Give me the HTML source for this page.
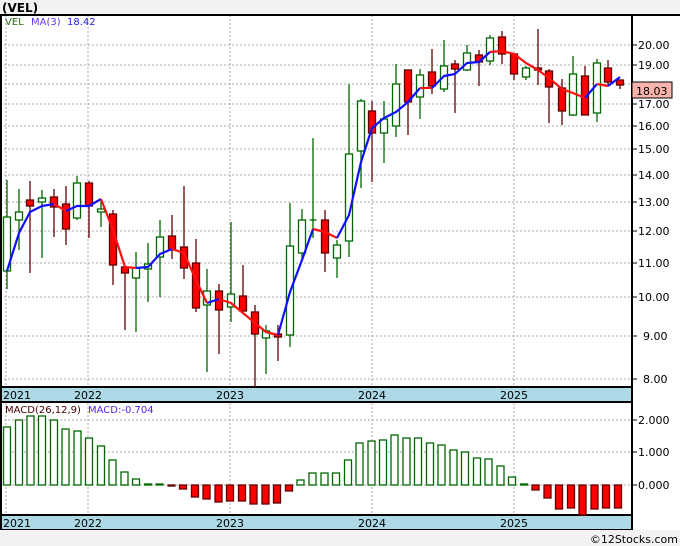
<!DOCTYPE html>
<html><head><meta charset="utf-8"><style>
html,body{margin:0;padding:0;background:#f2f2f2;}
svg{display:block;font-family:"DejaVu Sans","Liberation Sans",sans-serif;}
</style></head><body>
<svg width="680" height="546" viewBox="0 0 680 546" xmlns="http://www.w3.org/2000/svg">
<rect x="0" y="0" width="680" height="546" fill="#f2f2f2"/>
<text x="2" y="12" font-size="12" font-weight="bold" fill="#000">(VEL)</text>
<rect x="0" y="14" width="680" height="516" fill="#fff"/>
<!-- grids -->
<g stroke="#aaa" stroke-width="1" stroke-dasharray="2,2">
<line x1="0" y1="45" x2="632" y2="45"/><line x1="0" y1="65" x2="632" y2="65"/><line x1="0" y1="84" x2="632" y2="84"/><line x1="0" y1="104" x2="632" y2="104"/><line x1="0" y1="126" x2="632" y2="126"/><line x1="0" y1="149" x2="632" y2="149"/><line x1="0" y1="175" x2="632" y2="175"/><line x1="0" y1="202" x2="632" y2="202"/><line x1="0" y1="231" x2="632" y2="231"/><line x1="0" y1="263" x2="632" y2="263"/><line x1="0" y1="297" x2="632" y2="297"/><line x1="0" y1="336" x2="632" y2="336"/><line x1="0" y1="379" x2="632" y2="379"/>
<line x1="0" y1="420" x2="632" y2="420"/><line x1="0" y1="452" x2="632" y2="452"/><line x1="0" y1="485" x2="632" y2="485"/>
<line x1="6" y1="15" x2="6" y2="530"/><line x1="88" y1="15" x2="88" y2="530"/><line x1="230" y1="15" x2="230" y2="530"/><line x1="372" y1="15" x2="372" y2="530"/><line x1="514" y1="15" x2="514" y2="530"/>
</g>
<!-- frame -->
<rect x="0" y="387" width="632" height="15" fill="#add8e6"/>
<rect x="0" y="515" width="632" height="15" fill="#add8e6"/>
<g stroke="#000" stroke-width="2" fill="none">
<line x1="0" y1="15" x2="680" y2="15"/>
<line x1="1" y1="14" x2="1" y2="530"/>
<line x1="0" y1="387" x2="632" y2="387"/><line x1="0" y1="402" x2="632" y2="402"/>
<line x1="0" y1="515" x2="632" y2="515"/><line x1="0" y1="530" x2="632" y2="530"/>
<line x1="632" y1="14" x2="632" y2="530"/>
</g>
<g font-size="11" fill="#000">
<text x="3" y="399">2021</text><text x="74" y="399">2022</text><text x="216" y="399">2023</text><text x="358" y="399">2024</text><text x="500" y="399">2025</text>
<text x="3" y="527">2021</text><text x="74" y="527">2022</text><text x="216" y="527">2023</text><text x="358" y="527">2024</text><text x="500" y="527">2025</text>
</g>
<!-- right axis -->
<g stroke="#000" stroke-width="1">
<line x1="632" y1="45" x2="637" y2="45"/><line x1="632" y1="65" x2="637" y2="65"/><line x1="632" y1="84" x2="637" y2="84"/><line x1="632" y1="104" x2="637" y2="104"/><line x1="632" y1="126" x2="637" y2="126"/><line x1="632" y1="149" x2="637" y2="149"/><line x1="632" y1="175" x2="637" y2="175"/><line x1="632" y1="202" x2="637" y2="202"/><line x1="632" y1="231" x2="637" y2="231"/><line x1="632" y1="263" x2="637" y2="263"/><line x1="632" y1="297" x2="637" y2="297"/><line x1="632" y1="336" x2="637" y2="336"/><line x1="632" y1="379" x2="637" y2="379"/>
<line x1="632" y1="420" x2="637" y2="420"/><line x1="632" y1="452" x2="637" y2="452"/><line x1="632" y1="485" x2="637" y2="485"/>
</g>
<g font-size="11" fill="#000">
<text x="638" y="49">20.00</text><text x="638" y="69">19.00</text><text x="638" y="108">17.00</text><text x="638" y="130">16.00</text><text x="638" y="153">15.00</text><text x="638" y="179">14.00</text><text x="638" y="206">13.00</text><text x="638" y="235">12.00</text><text x="638" y="267">11.00</text><text x="638" y="301">10.00</text><text x="643" y="340">9.00</text><text x="643" y="383">8.00</text>
<text x="638" y="424">2.000</text><text x="638" y="456">1.000</text><text x="638" y="489">0.000</text>
</g>
<rect x="632" y="82" width="40" height="16" fill="#f8b4ac" stroke="#000" stroke-width="1"/>
<text x="636" y="95" font-size="11" fill="#000">18.03</text>
<!-- legend -->
<g font-size="10">
<text x="5" y="25" fill="#2a6a10">VEL</text>
<text x="31" y="25" fill="#6633ff">MA(3)</text>
<text x="67" y="25" fill="#2222ee">18.42</text>
<text x="5" y="413" fill="#400">MACD(26,12,9)</text>
<text x="88" y="413" fill="#5522ee">MACD:-0.704</text>
</g>
<!-- candles: green -->
<g stroke="#006600" stroke-width="1.3" fill="#fff">
<line x1="7" y1="180" x2="7" y2="289"/><rect x="3.5" y="217" width="7" height="54"/>
<line x1="19" y1="189" x2="19" y2="250"/><rect x="15.5" y="212" width="7" height="8"/>
<line x1="42" y1="190" x2="42" y2="258"/><rect x="38.5" y="198" width="7" height="4"/>
<line x1="77" y1="176" x2="77" y2="220"/><rect x="73.5" y="183" width="7" height="35"/>
<line x1="101" y1="199" x2="101" y2="227"/><rect x="97.5" y="209" width="7" height="3"/>
<line x1="136" y1="252" x2="136" y2="332"/><rect x="132.5" y="268" width="7" height="10"/>
<line x1="148" y1="243" x2="148" y2="302"/><rect x="144.5" y="264" width="7" height="5"/>
<line x1="160" y1="220" x2="160" y2="297"/><rect x="156.5" y="237" width="7" height="20"/>
<line x1="207" y1="269" x2="207" y2="372"/><rect x="203.5" y="291" width="7" height="14"/>
<line x1="231" y1="222" x2="231" y2="322"/><rect x="227.5" y="294" width="7" height="13"/>
<line x1="266" y1="325" x2="266" y2="374"/><rect x="262.5" y="331" width="7" height="7"/>
<line x1="290" y1="203" x2="290" y2="347"/><rect x="286.5" y="246" width="7" height="89"/>
<line x1="302" y1="209" x2="302" y2="260"/><rect x="298.5" y="220" width="7" height="33"/>
<line x1="313" y1="138" x2="313" y2="238"/><line x1="309.5" y1="220" x2="316.5" y2="220"/>
<line x1="337" y1="240" x2="337" y2="278"/><rect x="333.5" y="245" width="7" height="13"/>
<line x1="349" y1="84" x2="349" y2="257"/><rect x="345.5" y="154" width="7" height="87"/>
<line x1="361" y1="99" x2="361" y2="188"/><rect x="357.5" y="101" width="7" height="50"/>
<line x1="384" y1="101" x2="384" y2="163"/><rect x="380.5" y="119" width="7" height="14"/>
<line x1="396" y1="64" x2="396" y2="137"/><rect x="392.5" y="84" width="7" height="42"/>
<line x1="420" y1="69" x2="420" y2="119"/><rect x="416.5" y="75" width="7" height="22"/>
<line x1="444" y1="40" x2="444" y2="92"/><rect x="440.5" y="66" width="7" height="23"/>
<line x1="467" y1="45" x2="467" y2="71"/><rect x="463.5" y="53" width="7" height="17"/>
<line x1="490" y1="35" x2="490" y2="65"/><rect x="486.5" y="38" width="7" height="23"/>
<line x1="526" y1="66" x2="526" y2="80"/><rect x="522.5" y="68" width="7" height="9"/>
<line x1="573" y1="56" x2="573" y2="116"/><rect x="569.5" y="74" width="7" height="41"/>
<line x1="597" y1="59" x2="597" y2="122"/><rect x="593.5" y="63" width="7" height="50"/>
</g>
<!-- red candles -->
<g stroke="#600000" stroke-width="1.3" fill="#ff0000">
<line x1="30" y1="181" x2="30" y2="273"/><rect x="26.5" y="200" width="7" height="6"/>
<line x1="54" y1="189" x2="54" y2="237"/><rect x="50.5" y="197" width="7" height="10"/>
<line x1="66" y1="186" x2="66" y2="245"/><rect x="62.5" y="204" width="7" height="25"/>
<line x1="89" y1="181" x2="89" y2="238"/><rect x="85.5" y="183" width="7" height="23"/>
<line x1="113" y1="210" x2="113" y2="285"/><rect x="109.5" y="214" width="7" height="51"/>
<line x1="125" y1="265" x2="125" y2="330"/><rect x="121.5" y="267" width="7" height="6"/>
<line x1="172" y1="215" x2="172" y2="259"/><rect x="168.5" y="236" width="7" height="14"/>
<line x1="184" y1="186" x2="184" y2="279"/><rect x="180.5" y="247" width="7" height="21"/>
<line x1="196" y1="239" x2="196" y2="312"/><rect x="192.5" y="263" width="7" height="45"/>
<line x1="219" y1="284" x2="219" y2="354"/><rect x="215.5" y="291" width="7" height="19"/>
<line x1="243" y1="265" x2="243" y2="312"/><rect x="239.5" y="296" width="7" height="15"/>
<line x1="255" y1="305" x2="255" y2="387"/><rect x="251.5" y="312" width="7" height="22"/>
<line x1="278" y1="325" x2="278" y2="361"/><rect x="274.5" y="334" width="7" height="3"/>
<line x1="325" y1="210" x2="325" y2="272"/><rect x="321.5" y="220" width="7" height="33"/>
<line x1="372" y1="101" x2="372" y2="182"/><rect x="368.5" y="111" width="7" height="22"/>
<line x1="408" y1="70" x2="408" y2="135"/><rect x="404.5" y="70" width="7" height="32"/>
<line x1="432" y1="49" x2="432" y2="94"/><rect x="428.5" y="72" width="7" height="14"/>
<line x1="455" y1="60" x2="455" y2="113"/><rect x="451.5" y="64" width="7" height="5"/>
<line x1="479" y1="50" x2="479" y2="86"/><rect x="475.5" y="55" width="7" height="7"/>
<line x1="502" y1="31" x2="502" y2="64"/><rect x="498.5" y="37" width="7" height="17"/>
<line x1="514" y1="54" x2="514" y2="80"/><rect x="510.5" y="54" width="7" height="20"/>
<line x1="538" y1="29" x2="538" y2="85"/><rect x="534.5" y="68" width="7" height="2"/>
<line x1="549" y1="69" x2="549" y2="123"/><rect x="545.5" y="71" width="7" height="16"/>
<line x1="562" y1="79" x2="562" y2="125"/><rect x="558.5" y="88" width="7" height="23"/>
<line x1="585" y1="66" x2="585" y2="115"/><rect x="581.5" y="76" width="7" height="39"/>
<line x1="608" y1="60" x2="608" y2="86"/><rect x="604.5" y="68" width="7" height="14"/>
<line x1="620" y1="80" x2="620" y2="89"/><rect x="616.5" y="80" width="7" height="5"/>
</g>
<!-- MA line -->
<g fill="none" stroke-width="2.2" stroke-linejoin="round">
<polyline stroke="#1010ff" points="7,271 19,233 30,212 42,206 54,204"/>
<polyline stroke="#ff1010" points="54,204 66,211"/>
<polyline stroke="#1010ff" points="66,211 77,206 89,206 101,199"/>
<polyline stroke="#ff1010" points="101,199 113,230 125,267 136,268"/>
<polyline stroke="#1010ff" points="136,268 148,267 160,254 172,249"/>
<polyline stroke="#ff1010" points="172,249 184,253 196,280 207,303"/>
<polyline stroke="#1010ff" points="207,303 219,299"/>
<polyline stroke="#ff1010" points="219,299 231,303 243,313 255,323 266,332 278,335"/>
<polyline stroke="#1010ff" points="278,335 290,292 302,260 313,229"/>
<polyline stroke="#ff1010" points="313,229 325,232 337,238"/>
<polyline stroke="#1010ff" points="337,238 349,215 361,162 372,128 384,118 396,112 408,102 420,88"/>
<polyline stroke="#ff1010" points="420,88 432,88"/>
<polyline stroke="#1010ff" points="432,88 444,76 455,74 467,63 479,62 490,52"/>
<polyline stroke="#ff1010" points="490,52 502,51 514,54 526,63 538,70 549,78 562,89 573,93 585,98"/>
<polyline stroke="#1010ff" points="585,98 597,84"/>
<polyline stroke="#ff1010" points="597,84 608,86"/>
<polyline stroke="#1010ff" points="608,86 620,77"/>
</g>
<!-- MACD bars green -->
<g stroke="#006600" stroke-width="1.3" fill="#fff">
<rect x="3.5" y="427" width="7" height="58"/><rect x="15.5" y="420" width="7" height="65"/><rect x="27" y="416" width="7" height="69"/><rect x="38.5" y="416" width="7" height="69"/><rect x="50.5" y="420" width="7" height="65"/><rect x="62" y="429" width="7" height="56"/><rect x="74" y="431" width="7" height="54"/><rect x="85.5" y="438" width="7" height="47"/><rect x="97.5" y="446" width="7" height="39"/><rect x="109" y="460" width="7" height="25"/><rect x="121" y="472" width="7" height="13"/><rect x="132.5" y="479" width="7" height="6"/>
<rect x="144.5" y="484" width="7" height="1"/><rect x="156" y="484" width="7" height="1"/>
<rect x="297" y="480" width="7" height="5"/><rect x="309" y="473" width="7" height="12"/><rect x="321" y="473" width="7" height="12"/><rect x="332.5" y="473" width="7" height="12"/><rect x="344.5" y="460" width="7" height="25"/><rect x="356" y="443" width="7" height="42"/><rect x="368" y="441" width="7" height="44"/><rect x="379.5" y="440" width="7" height="45"/><rect x="391" y="435" width="7" height="50"/><rect x="403" y="438" width="7" height="47"/><rect x="414.5" y="438" width="7" height="47"/><rect x="426.5" y="443" width="7" height="42"/><rect x="438" y="445" width="7" height="40"/><rect x="450" y="450" width="7" height="35"/><rect x="461.5" y="452" width="7" height="33"/><rect x="473.5" y="458" width="7" height="27"/><rect x="485" y="459" width="7" height="26"/><rect x="497" y="466" width="7" height="19"/><rect x="508.5" y="477" width="7" height="8"/><rect x="520.5" y="484" width="7" height="1"/>
</g>
<g stroke="#600000" stroke-width="1.3" fill="#ff0000">
<rect x="168" y="485" width="7" height="1"/><rect x="179.5" y="485" width="7" height="4"/><rect x="191.5" y="485" width="7" height="12"/><rect x="203" y="485" width="7" height="14"/><rect x="215" y="485" width="7" height="17"/><rect x="226.5" y="485" width="7" height="16"/><rect x="238.5" y="485" width="7" height="16"/><rect x="250" y="485" width="7" height="19"/><rect x="262" y="485" width="7" height="19"/><rect x="273.5" y="485" width="7" height="18"/><rect x="285.5" y="485" width="7" height="6"/>
<rect x="532" y="485" width="7" height="5"/><rect x="544" y="485" width="7" height="13"/><rect x="555.5" y="485" width="7" height="24"/><rect x="567.5" y="485" width="7" height="23"/><rect x="579" y="485" width="7" height="30"/><rect x="591" y="485" width="7" height="24"/><rect x="602.5" y="485" width="7" height="23"/><rect x="614.5" y="485" width="7" height="23"/>
</g>
<rect x="0" y="530" width="680" height="16" fill="#f2f2f2"/>
<text x="678" y="543" font-size="11" fill="#000" text-anchor="end">©12Stocks.com</text>
</svg>
</body></html>
